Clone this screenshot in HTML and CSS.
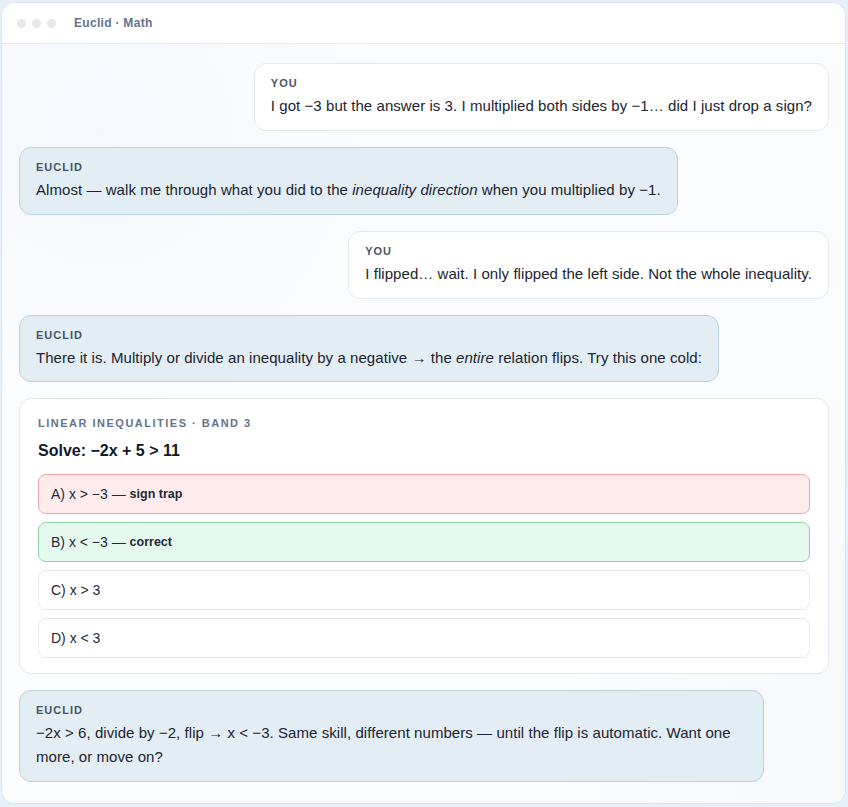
FILE: index.html
```html
<!DOCTYPE html>
<html lang="en">
<head>
<meta charset="utf-8">
<title>Euclid · Math</title>
<link rel="stylesheet" href="styles.css">
</head>
<body>
<div class="window">
  <header class="titlebar">
    <span class="dots"><i></i><i></i><i></i></span>
    <span class="title">Euclid · Math</span>
  </header>
  <main class="chat">
    <div class="msg user">
      <div class="who">You</div>
      <p>I got −3 but the answer is 3. I multiplied both sides by −1… did I just drop a sign?</p>
    </div>
    <div class="msg tutor">
      <div class="who">Euclid</div>
      <p>Almost — walk me through what you did to the <em>inequality direction</em> when you multiplied by −1.</p>
    </div>
    <div class="msg user">
      <div class="who">You</div>
      <p>I flipped… wait. I only flipped the left side. Not the whole inequality.</p>
    </div>
    <div class="msg tutor">
      <div class="who">Euclid</div>
      <p>There it is. Multiply or divide an inequality by a negative → the <em>entire</em> relation flips. Try this one cold:</p>
    </div>
    <section class="quiz">
      <div class="quiz-tag">Linear inequalities · Band 3</div>
      <h2 class="quiz-q">Solve: −2x + 5 &gt; 11</h2>
      <div class="opts">
        <div class="opt wrong">A) x &gt; −3 — <b>sign trap</b></div>
        <div class="opt right">B) x &lt; −3 — <b>correct</b></div>
        <div class="opt">C) x &gt; 3</div>
        <div class="opt">D) x &lt; 3</div>
      </div>
    </section>
    <div class="msg tutor">
      <div class="who">Euclid</div>
      <p>−2x &gt; 6, divide by −2, flip → x &lt; −3. Same skill, different numbers — until the flip is automatic. Want one more, or move on?</p>
    </div>
  </main>
</div>
</body>
</html>
```

FILE: styles.css
```css
* { box-sizing: border-box; }

html, body {
  margin: 0;
  height: 100%;
}

body {
  background: #e7effa;
  font-family: "Liberation Sans", Arial, sans-serif;
  color: #1c2431;
  padding: 2px 2px 3px 1px;
}

.window {
  height: 100%;
  display: flex;
  flex-direction: column;
  background: #fff;
  border: 1px solid #dde5f0;
  border-radius: 14px;
  overflow: hidden;
}

.titlebar {
  height: 41px;
  flex: none;
  display: flex;
  align-items: center;
  padding: 0 15px;
  background: #fff;
  border-bottom: 1px solid #e6e9ee;
}

.dots {
  display: flex;
  gap: 6px;
}

.dots i {
  width: 9px;
  height: 9px;
  border-radius: 50%;
  background: #e5e7eb;
}

.title {
  margin-left: 18px;
  font-size: 12px;
  font-weight: 700;
  color: #64748b;
  letter-spacing: 0.3px;
}

.chat {
  flex: 1;
  display: flex;
  flex-direction: column;
  gap: 16px;
  padding: 19px 16px 20px 17px;
  background:
    radial-gradient(circle at 12% 12%, rgba(232, 240, 250, 0.35), rgba(232, 240, 250, 0) 28%),
    radial-gradient(circle at 100% 90%, rgba(240, 242, 246, 0.45), rgba(240, 242, 246, 0) 26%),
    #fbfcfd;
}

.msg {
  max-width: 92%;
  border: 1px solid;
  border-radius: 12px;
  padding: 12px 16px;
}

.msg.user {
  align-self: flex-end;
  background: #fff;
  border-color: #e5e8ed;
}

.msg.tutor {
  align-self: flex-start;
  background: #e2edf4;
  border-color: #b9d4e1;
  padding-bottom: 11.5px;
}

.who {
  font-size: 11px;
  line-height: 14px;
  font-weight: 700;
  letter-spacing: 1px;
  text-transform: uppercase;
  color: #4b5563;
  margin-bottom: 4px;
}

.tutor .who { color: #475569; }

.msg p {
  margin: 0;
  font-size: 15px;
  line-height: 24px;
  letter-spacing: 0.06px;
}

.quiz {
  background: #fff;
  border: 1px solid #e5e8ed;
  border-radius: 12px;
  padding: 17px 18px 15px;
}

.quiz-tag {
  font-size: 11px;
  line-height: 14px;
  font-weight: 700;
  letter-spacing: 1.5px;
  text-transform: uppercase;
  color: #64748b;
}

.quiz-q {
  margin: 10px 0 12px;
  font-size: 16px;
  line-height: 22px;
  font-weight: 700;
  color: #111827;
}

.opts {
  display: flex;
  flex-direction: column;
  gap: 8px;
}

.opt {
  height: 40px;
  display: flex;
  align-items: center;
  padding: 0 12px;
  border: 1px solid #e5e8ed;
  border-radius: 8px;
  background: #fff;
  font-size: 14px;
  color: #1f2937;
  white-space: pre;
}

.opt b {
  font-size: 12.5px;
  font-weight: 700;
}

.opt.wrong {
  background: #fdeceb;
  border-color: #eea5a5;
}

.opt.right {
  background: #e6f9ee;
  border-color: #8fd3a6;
}
```
